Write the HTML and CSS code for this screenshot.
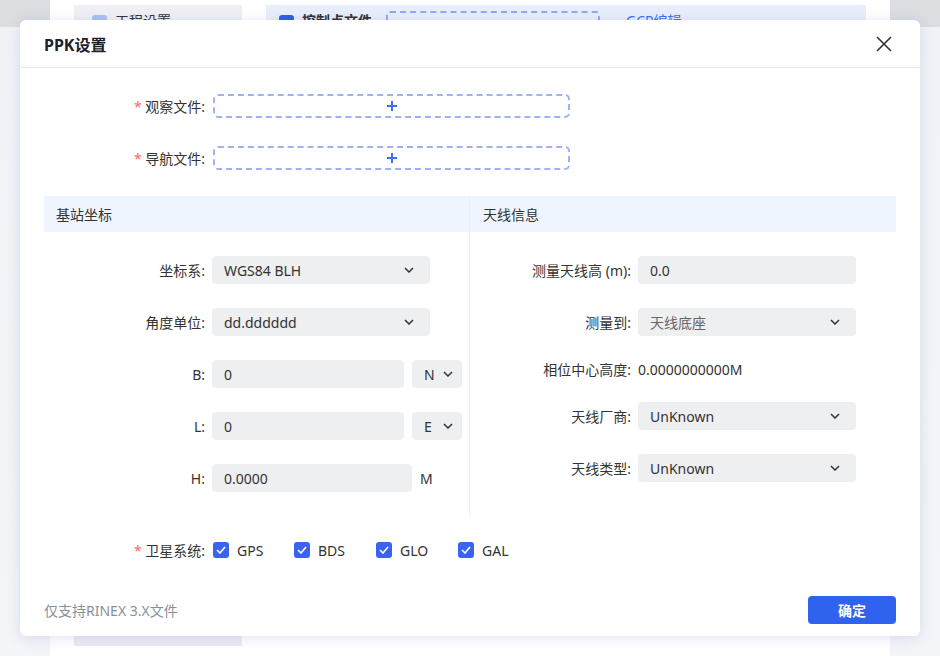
FILE: index.html
```html
<!DOCTYPE html>
<html lang="zh-CN">
<head>
<meta charset="utf-8">
<title>PPK设置</title>
<link rel="stylesheet" href="styles.css">
</head>
<body>
<div class="page">
  <div class="panel">
    <div class="bg-row">
      <div class="side-item"><span class="sq sq-light"></span><span>工程设置</span></div>
      <div class="band">
        <span class="sq sq-blue"></span><span class="band-title">控制点文件</span>
        <div class="bg-upload"><span class="bg-plus"></span></div>
        <span class="bg-link">GCP编辑</span>
      </div>
    </div>
    <div class="bg-bottom"></div>
  </div>
</div>

<div class="modal">
  <div class="modal-header">
    <span class="modal-title">PPK设置</span>
    <svg class="close" width="18" height="18" viewBox="0 0 18 18"><path d="M2 2L16 16M16 2L2 16" stroke="#333" stroke-width="1.6" fill="none"/></svg>
  </div>
  <div class="modal-body">
    <div class="row row-upload">
      <label class="lbl"><span class="req">*</span> 观察文件:</label>
      <div class="upload"><svg width="12" height="12" viewBox="0 0 12 12"><path d="M6 1v10M1 6h10" stroke="#3b6ff0" stroke-width="2" fill="none"/></svg></div>
    </div>
    <div class="row row-upload">
      <label class="lbl"><span class="req">*</span> 导航文件:</label>
      <div class="upload"><svg width="12" height="12" viewBox="0 0 12 12"><path d="M6 1v10M1 6h10" stroke="#3b6ff0" stroke-width="2" fill="none"/></svg></div>
    </div>

    <div class="section">
      <div class="col col-left">
        <div class="sec-head">基站坐标</div>
        <div class="sec-body">
          <div class="row">
            <label class="lbl">坐标系:</label>
            <div class="select w218"><span>WGS84 BLH</span><svg class="chev" width="10" height="6" viewBox="0 0 10 6"><path d="M1 1l4 4 4-4" stroke="#333" stroke-width="1.5" fill="none"/></svg></div>
          </div>
          <div class="row">
            <label class="lbl">角度单位:</label>
            <div class="select w218"><span>dd.dddddd</span><svg class="chev" width="10" height="6" viewBox="0 0 10 6"><path d="M1 1l4 4 4-4" stroke="#333" stroke-width="1.5" fill="none"/></svg></div>
          </div>
          <div class="row">
            <label class="lbl">B:</label>
            <div class="input w192">0</div>
            <div class="select mini"><span>N</span><svg class="chev" width="10" height="6" viewBox="0 0 10 6"><path d="M1 1l4 4 4-4" stroke="#333" stroke-width="1.5" fill="none"/></svg></div>
          </div>
          <div class="row">
            <label class="lbl">L:</label>
            <div class="input w192">0</div>
            <div class="select mini"><span>E</span><svg class="chev" width="10" height="6" viewBox="0 0 10 6"><path d="M1 1l4 4 4-4" stroke="#333" stroke-width="1.5" fill="none"/></svg></div>
          </div>
          <div class="row">
            <label class="lbl">H:</label>
            <div class="input w200">0.0000</div>
            <span class="unit">M</span>
          </div>
        </div>
      </div>
      <div class="col col-right">
        <div class="sec-head">天线信息</div>
        <div class="sec-body">
          <div class="row">
            <label class="lbl">测量天线高 (m):</label>
            <div class="input w218">0.0</div>
          </div>
          <div class="row">
            <label class="lbl">测量到:</label>
            <div class="select w218 muted"><span>天线底座</span><svg class="chev" width="10" height="6" viewBox="0 0 10 6"><path d="M1 1l4 4 4-4" stroke="#333" stroke-width="1.5" fill="none"/></svg></div>
          </div>
          <div class="row row-text">
            <label class="lbl">相位中心高度:</label>
            <span class="value">0.0000000000M</span>
          </div>
          <div class="row">
            <label class="lbl">天线厂商:</label>
            <div class="select w218"><span>UnKnown</span><svg class="chev" width="10" height="6" viewBox="0 0 10 6"><path d="M1 1l4 4 4-4" stroke="#333" stroke-width="1.5" fill="none"/></svg></div>
          </div>
          <div class="row">
            <label class="lbl">天线类型:</label>
            <div class="select w218"><span>UnKnown</span><svg class="chev" width="10" height="6" viewBox="0 0 10 6"><path d="M1 1l4 4 4-4" stroke="#333" stroke-width="1.5" fill="none"/></svg></div>
          </div>
        </div>
      </div>
    </div>

    <div class="row row-check">
      <label class="lbl"><span class="req">*</span> 卫星系统:</label>
      <div class="checks">
        <span class="cb-item"><span class="cb"><svg width="10" height="8" viewBox="0 0 10 8"><path d="M1 4l3 3 5-6" stroke="#fff" stroke-width="1.6" fill="none"/></svg></span>GPS</span>
        <span class="cb-item"><span class="cb"><svg width="10" height="8" viewBox="0 0 10 8"><path d="M1 4l3 3 5-6" stroke="#fff" stroke-width="1.6" fill="none"/></svg></span>BDS</span>
        <span class="cb-item"><span class="cb"><svg width="10" height="8" viewBox="0 0 10 8"><path d="M1 4l3 3 5-6" stroke="#fff" stroke-width="1.6" fill="none"/></svg></span>GLO</span>
        <span class="cb-item"><span class="cb"><svg width="10" height="8" viewBox="0 0 10 8"><path d="M1 4l3 3 5-6" stroke="#fff" stroke-width="1.6" fill="none"/></svg></span>GAL</span>
      </div>
    </div>
  </div>
  <div class="modal-footer">
    <span class="hint">仅支持RINEX 3.X文件</span>
    <button class="btn">确定</button>
  </div>
</div>
</body>
</html>
```

FILE: styles.css
```css
* { box-sizing: border-box; }
html, body { margin: 0; padding: 0; }
body {
  width: 940px;
  height: 656px;
  overflow: hidden;
  font-family: "Noto Sans", "Noto Sans CJK SC", sans-serif;
  font-size: 14px;
  color: #333;
  background: linear-gradient(to bottom, #dcdde1 0, #dcdde1 27px, #f1f2f6 27px, #f4f5f8 100%);
}
.page { height: 656px; display: flex; }
.panel {
  margin: 0 50px;
  width: 840px;
  height: 656px;
  background: #fff;
  display: flex;
  flex-direction: column;
}
.bg-row {
  display: flex;
  gap: 24px;
  padding: 5px 0 0 24px;
  height: 50px;
}
.side-item {
  width: 168px;
  background: #eff0f5;
  display: flex;
  align-items: flex-start;
  padding: 6px 0 0 18px;
  gap: 8px;
  color: #333;
  line-height: 20px;
}
.sq { width: 15px; height: 15px; border-radius: 3px; display: inline-block; margin-top: 4px; }
.sq-light { background: #a9c1f5; }
.sq-blue { background: #2f5fe8; }
.band {
  width: 600px;
  background: #e8eefb;
  display: flex;
  align-items: flex-start;
  padding: 6px 0 0 13px;
  gap: 8px;
  line-height: 20px;
}
.band-title { font-weight: 700; }
.bg-upload {
  width: 214px;
  height: 30px;
  border: 2px dashed #8fa8f3;
  border-radius: 4px;
  margin-left: 6px;
  margin-top: 0;
  position: relative;
}
.bg-plus {
  position: absolute;
  left: 105px;
  top: 8px;
  width: 2px;
  height: 10px;
  background: #3b6ff0;
}
.bg-link { color: #3b6ff0; margin-left: 18px; }
.bg-bottom {
  margin: auto 0 10px 24px;
  width: 168px;
  height: 20px;
  background: #ebecf3;
}

.modal {
  position: absolute;
  left: 20px;
  top: 20px;
  width: 900px;
  height: 616px;
  background: #fff;
  border-radius: 6px;
  box-shadow: 0 2px 14px rgba(70, 90, 170, 0.16);
  display: flex;
  flex-direction: column;
}
.modal-header {
  height: 48px;
  border-bottom: 1px solid #e6e7ec;
  padding: 0 27px 0 24px;
  display: flex;
  align-items: center;
  justify-content: space-between;
}
.modal-title { font-size: 16px; font-weight: 700; color: #1d2129; }
.modal-body { padding: 26px 24px 0; }

.row { display: flex; align-items: center; height: 28px; margin-bottom: 24px; }
.row:last-child { margin-bottom: 0; }
.row-upload { height: 24px; margin-bottom: 28px; }
.row-upload:nth-child(2) { margin-bottom: 26px; }
.row-text { height: 18px; }
.lbl {
  width: 161px;
  flex: none;
  text-align: right;
  margin-right: 7px;
  color: #333;
  white-space: nowrap;
}
.req { color: #f56c6c; }
.upload {
  width: 357px;
  height: 24px;
  margin-left: 1px;
  border: 2px dashed #9db2f5;
  border-radius: 5px;
  display: flex;
  align-items: center;
  justify-content: center;
}

.section { display: grid; grid-template-columns: 426px 426px; }
.col-left { border-right: 1px solid #eceef2; }
.sec-head {
  height: 36px;
  background: #eef5fe;
  display: flex;
  align-items: center;
  padding-left: 12px;
  color: #333;
}
.col-right .sec-head { padding-left: 13px; }
.sec-body { padding: 24px 0 23px; }

.input, .select {
  height: 28px;
  background: #eeeff1;
  border-radius: 4px;
  display: flex;
  align-items: center;
  padding: 0 12px;
  color: #333;
  flex: none;
}
.select { justify-content: space-between; padding-right: 16px; }
.select.muted span { color: #666; }
.select.mini { width: 50px; margin-left: 8px; padding-right: 9px; }
.w218 { width: 218px; }
.w192 { width: 192px; }
.w200 { width: 200px; }
.unit { margin-left: 8px; }
.value { color: #333; }

.row-check { margin-top: 21px; }
.checks { display: flex; margin-left: 1px; }
.cb-item { display: flex; align-items: center; width: 82px; gap: 8px; }
.cb-item:first-child { width: 81px; }
.cb {
  width: 16px;
  height: 16px;
  border-radius: 3px;
  background: #3a63f1;
  display: flex;
  align-items: center;
  justify-content: center;
}

.modal-footer {
  margin-top: auto;
  padding: 0 24px 12px;
  display: flex;
  align-items: center;
  justify-content: space-between;
}
.hint { color: #86909c; }
.btn {
  width: 88px;
  height: 28px;
  border: none;
  border-radius: 4px;
  background: #2f62ef;
  color: #fff;
  font-family: "Noto Sans", "Noto Sans CJK SC", sans-serif;
  font-size: 14px;
  font-weight: 700;
}
```
